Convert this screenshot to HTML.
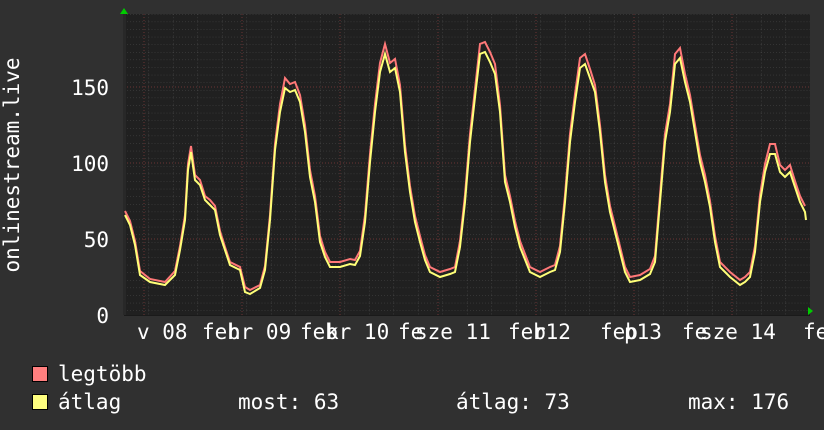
<!DOCTYPE html>
<html><head><meta charset="utf-8"><style>
body{margin:0;background:#303030;width:824px;height:430px;overflow:hidden}
svg{display:block}
text{font-family:"DejaVu Sans Mono","Liberation Mono",monospace;fill:#fff;font-size:21px}
</style></head><body>
<svg width="824" height="430" viewBox="0 0 824 430">
<defs>
<pattern id="g" x="124" y="14" width="24.5" height="7.6" patternUnits="userSpaceOnUse">
<path d="M0 0V7.6M0 0H24.5" stroke="#4a4a4a" stroke-width="1" stroke-dasharray="1,2" fill="none"/>
</pattern>
</defs>
<rect x="124" y="14" width="686" height="301" fill="#202020"/>
<rect x="124" y="14" width="686" height="301" fill="url(#g)"/>
<g stroke="#6a3434" stroke-dasharray="1,2">
<path d="M144 14V315M242 14V315M340 14V315M438 14V315M536 14V315M634 14V315M732 14V315"/>
<path d="M124 239H810M124 163H810M124 87H810"/>
</g>
<path d="M124 315.5H810" stroke="#1a1a1a"/>
<path d="M124.5 14V315" stroke="#282828" stroke-width="3"/>
<polygon points="120,14 124,8 128,14" fill="#0c0"/>
<polygon points="808,307 813,311 808,315" fill="#0c0"/>
<polyline fill="none" stroke="#ff7878" stroke-width="2" points="125,211 130,221 135,241 140,271 150,279 165,282 175,271 180,246 185,215 188,164 191,146 195,175 200,180 205,196 210,200 215,206 220,231 225,247 230,262 240,267 245,287 250,290 260,285 265,266 270,215 275,144 280,104 285,78 290,84 295,82 300,95 305,125 310,170 315,196 320,236 325,252 330,262 340,262 350,259 355,260 360,251 365,215 370,154 375,104 380,63 385,44 390,63 395,59 400,85 405,145 410,186 415,216 420,236 425,255 430,267 440,272 450,269 455,267 460,241 465,195 470,134 475,89 480,44 485,42 490,52 495,64 500,105 505,175 510,196 515,221 520,241 530,267 540,272 550,267 555,265 560,246 565,195 570,134 575,94 580,58 585,54 590,69 595,85 600,125 605,175 610,206 615,226 625,267 630,277 640,275 650,269 655,256 660,195 665,134 670,104 675,54 680,48 685,74 690,95 695,125 700,155 705,175 710,201 715,236 720,262 730,272 740,280 745,277 750,272 755,246 760,195 765,164 770,144 775,144 780,165 785,170 790,165 795,181 800,196 805,206"/>
<polyline fill="none" stroke="#ffff78" stroke-width="2" points="125,215 130,225 135,245 140,275 150,282 165,285 175,275 180,250 185,220 188,170 191,152 195,180 200,185 205,200 210,205 215,210 220,235 225,250 230,265 240,270 245,292 250,294 260,288 265,270 270,220 275,150 280,112 285,88 290,92 295,90 300,102 305,132 310,177 315,202 320,242 325,257 330,267 340,267 350,264 355,265 360,256 365,222 370,162 375,112 380,72 385,54 390,72 395,68 400,92 405,152 410,192 415,222 420,242 425,260 430,272 440,277 450,274 455,272 460,247 465,202 470,142 475,97 480,54 485,52 490,62 495,74 500,112 505,182 510,202 515,227 520,247 530,272 540,277 550,272 555,270 560,252 565,202 570,142 575,102 580,68 585,64 590,78 595,92 600,132 605,182 610,212 615,232 625,272 630,282 640,280 650,274 655,262 660,202 665,142 670,112 675,64 680,58 685,82 690,102 695,132 700,162 705,182 710,207 715,242 720,267 730,277 740,285 745,282 750,277 755,252 760,202 765,172 770,154 775,154 780,172 785,177 790,172 795,187 800,202 805,212 806,220"/>
<g text-anchor="end">
<text x="109" y="95">150</text>
<text x="109" y="171">100</text>
<text x="109" y="247">50</text>
<text x="109" y="323">0</text>
</g>
<text transform="translate(19,165) rotate(-90)" text-anchor="middle">onlinestream.live</text>
<g>
<text x="137" y="339">v 08</text>
<text x="202" y="339">feb</text><text x="228" y="339">hr 09</text>
<text x="300" y="339">feb</text><text x="326" y="339">kr 10</text>
<text x="398" y="339">fe</text><text x="415" y="339">sze 11</text>
<text x="508" y="339">feb</text><text x="533" y="339">r12</text>
<text x="600" y="339">feb</text><text x="624" y="339">p13</text>
<text x="682" y="339">fe</text><text x="700" y="339">sze 14</text>
<text x="803" y="339">fe</text>
</g>
<rect x="32.5" y="366.5" width="15" height="15" fill="#ff7f7f" stroke="#000"/>
<rect x="32.5" y="394.5" width="15" height="15" fill="#ffff7f" stroke="#000"/>
<text x="58" y="381">legtöbb</text>
<text x="58" y="409">átlag</text>
<text x="238" y="409">most: 63</text>
<text x="456" y="409">átlag: 73</text>
<text x="688" y="409">max: 176</text>
</svg>
</body></html>
